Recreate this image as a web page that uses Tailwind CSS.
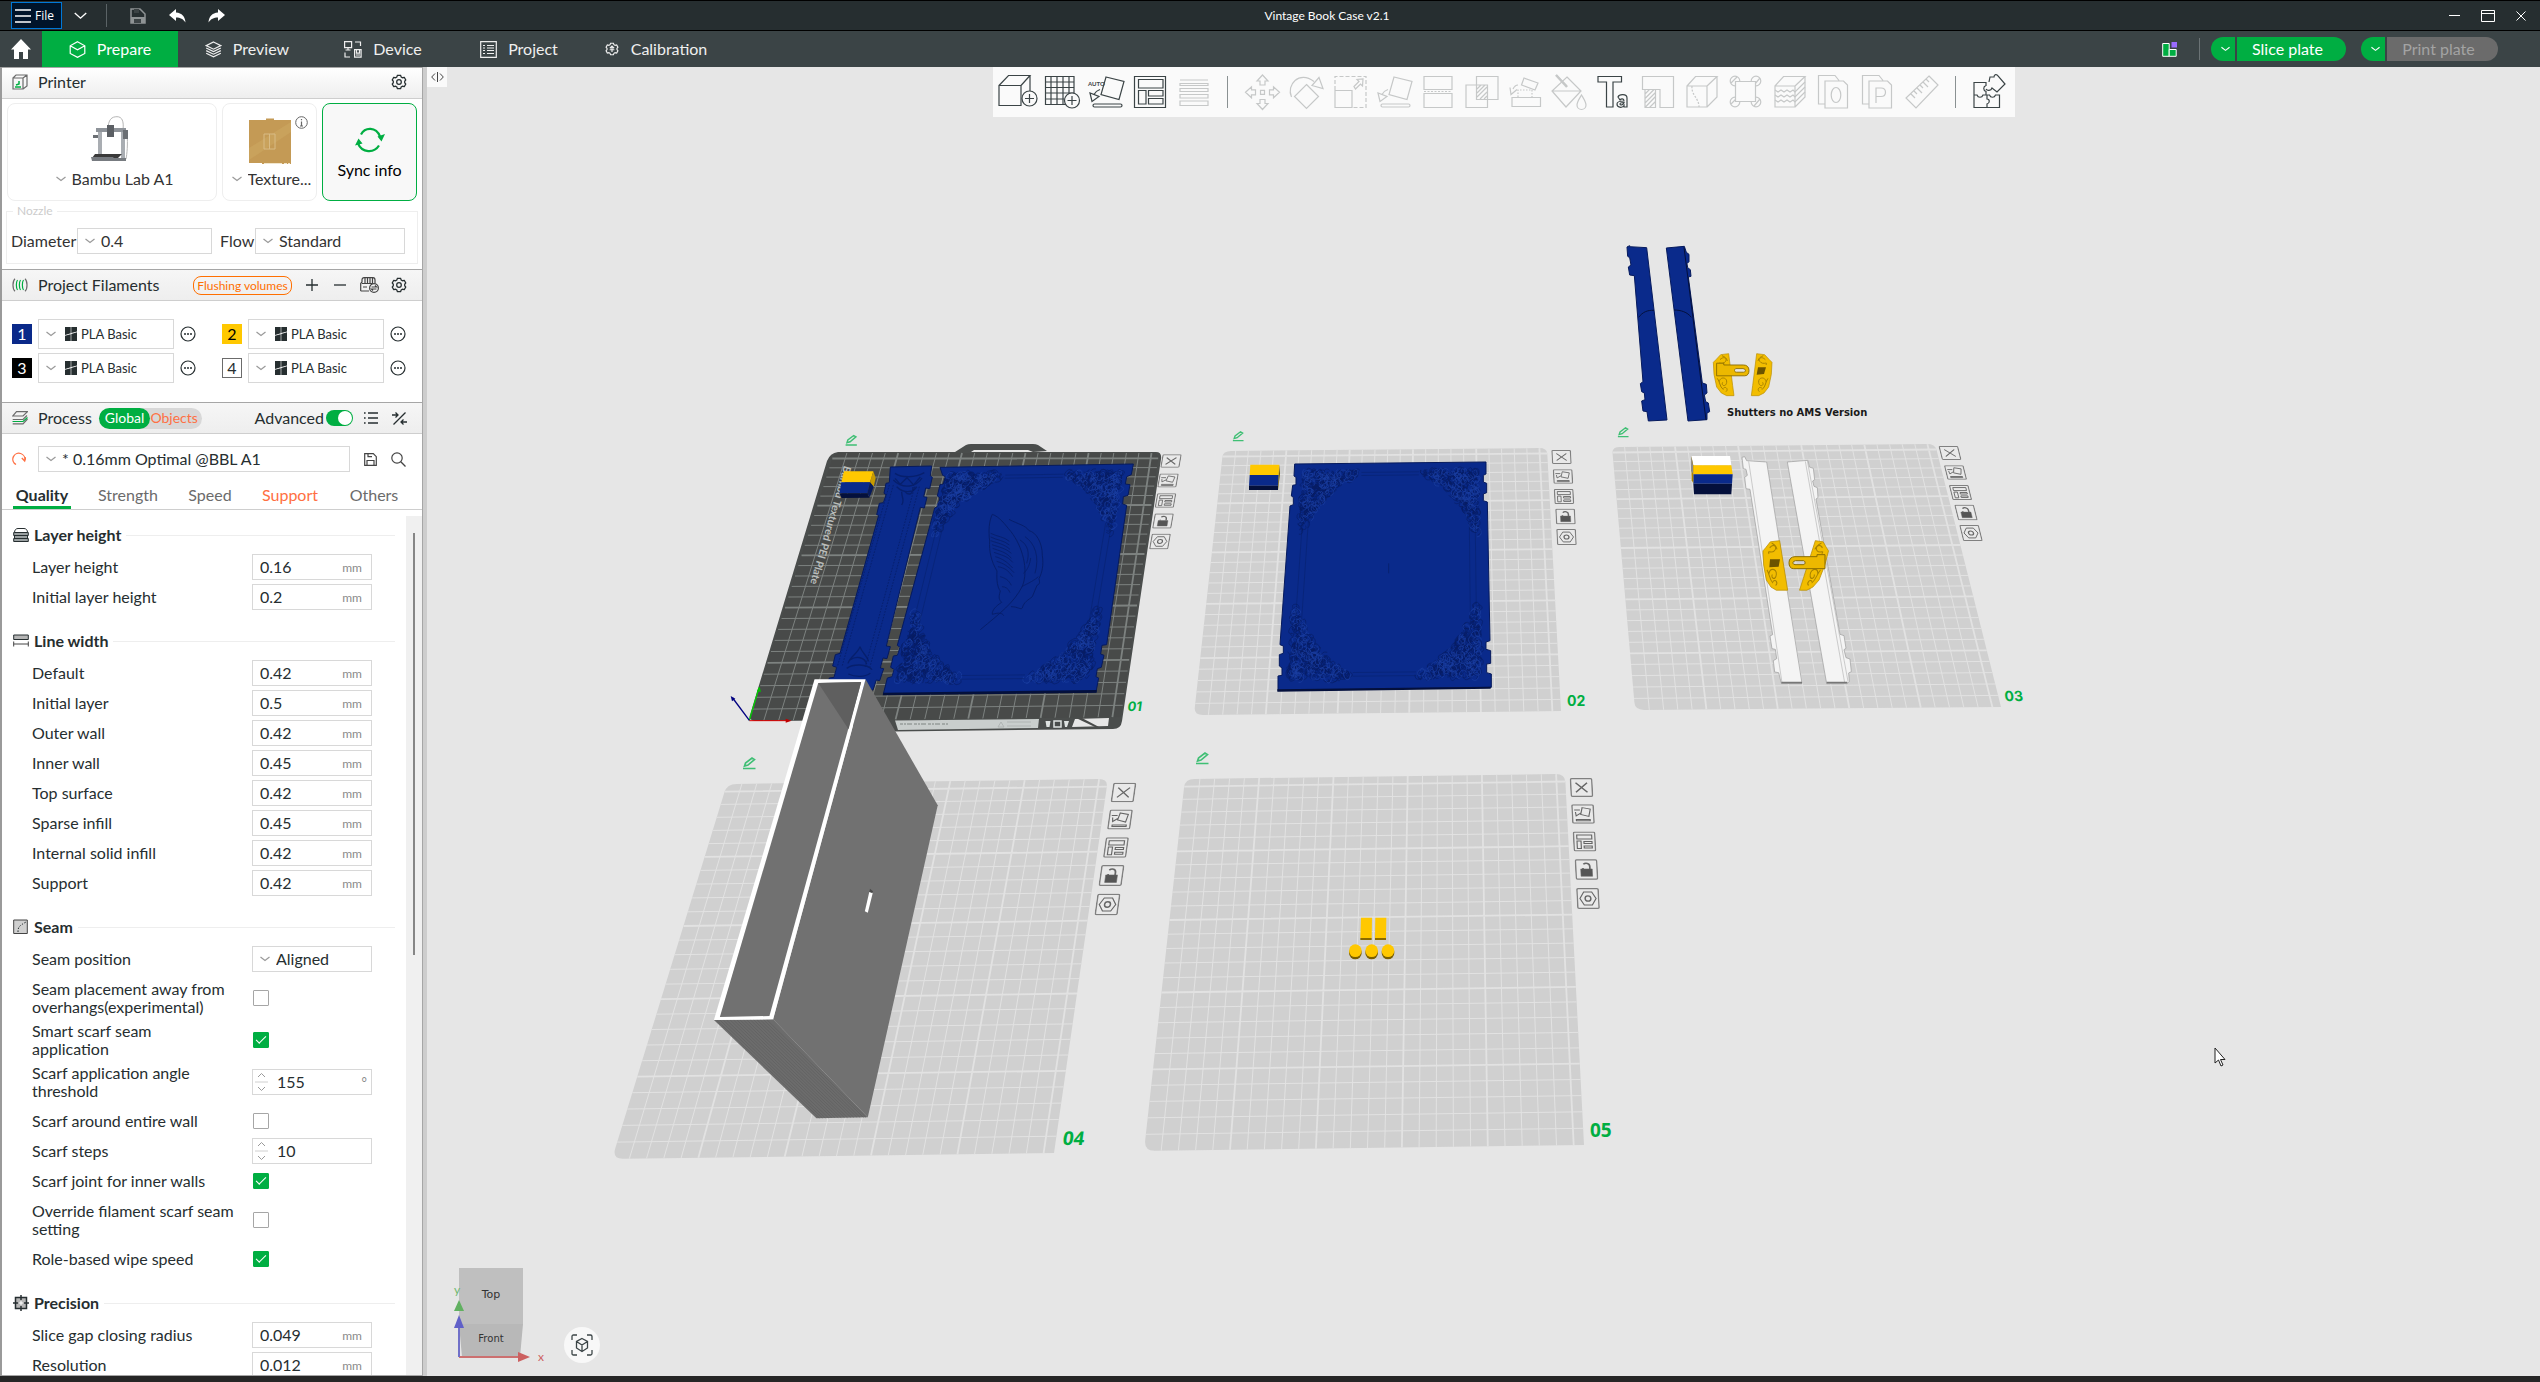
<!DOCTYPE html>
<html lang="en">
<head>
    <meta charset="UTF-8">
    <meta name="viewport" content="width=device-width, initial-scale=1.0">
    <title>Vintage Book Case v2.1</title>
    <script src="https://cdn.jsdelivr.net/npm/@tailwindcss/browser@4"></script>
</head>
<body class="h-screen overflow-hidden flex flex-col bg-[#262626] font-['Lato',sans-serif] text-base leading-[18px] text-[#262e30]">

    <!-- shared icons -->
    <svg class="hidden" aria-hidden="true">
        <symbol id="i-down" viewBox="0 0 10 6"><path d="M0.5 1 5 4.5 9.5 1" fill="none" stroke="currentColor" stroke-width="1.2"/></symbol>
        <symbol id="i-gear" viewBox="0 0 18 18"><g fill="none" stroke="currentColor" stroke-width="1.4"><path d="M7.2 1.6h3.6l.7 1.8 1.5.8 2-.4 1.6 2.9L15.400 8.200v1.600l1.200 1.500-1.600 2.900-2-.4-1.500.8-.7 1.800H7.200l-.7-1.800-1.500-.8-2 .4-1.600-2.900L2.600 9.800V8.200L1.400 6.700 3 3.800l2 .4 1.500-.8z"/><circle cx="9" cy="9" r="2.600"/></g></symbol>
        <symbol id="i-more" viewBox="0 0 16 16"><circle cx="8" cy="8" r="7" fill="none" stroke="currentColor" stroke-width="1.200"/><path d="M4 7.300h2v1.400H4zM7 7.300h2v1.400H7zM10 7.300h2v1.400h-2z" fill="currentColor"/></symbol>
        <symbol id="i-pla" viewBox="0 0 12 14"><path d="M0 0h5.700v6.300L0 8zM6.300 0H12v4.500L6.300 6zM0 8.700l5.700-1.500V14H0zM6.300 7 12 5.300V14H6.300z" fill="#262e30"/></symbol>
        <symbol id="i-flatten" viewBox="0 0 40 40"><g fill="none" stroke="currentColor" stroke-width="1.200"><path d="M20 5l18 4.500-5 18-18-5z"/><path d="M14 17.500c-3 1-5 3-6 5M4 21l2 8.500 7-5z"/><rect x="7" y="32" width="29" height="3" rx="1.500"/></g></symbol>
        <symbol id="i-arrange" viewBox="0 0 40 40"><g fill="none" stroke="currentColor" stroke-width="1.200"><path d="M4.500 4.500h31v31h-31zM8.500 7.500h24.500v8.500H8.500zM8.500 18.500H16V32H8.500zM18.500 18.500H33V24H18.500zM18.500 26.500H33V32H18.500z"/></g></symbol>
    </svg>

    <!-- title bar -->
    <header class="flex items-center h-[31px] shrink-0 bg-[#262e30] border-y border-black text-white">
        <div class="flex items-center w-[230px] pl-[11px]">
            <button class="flex items-center gap-1 h-[27px] w-[51px] pl-[3px] bg-[#00142a] border border-[#0078d7] font-['Open_Sans',sans-serif] text-xs">
                <svg class="w-4 h-[14px]" viewBox="0 0 16 14"><path d="M0 1h16M0 7h16M0 13h16" stroke="#fff" stroke-width="1.400"/></svg>File
            </button>
            <button class="ml-3" aria-label="More menus"><svg class="w-[13px] h-[8px]" viewBox="0 0 12 7"><path d="M.7.7 6 5.500 11.300.7" fill="none" stroke="#fff" stroke-width="1.300"/></svg></button>
            <span class="w-px h-[23px] ml-[19px] bg-[#5b6366]"></span>
            <button class="ml-[23px]" aria-label="Save"><svg class="w-4 h-4" viewBox="0 0 16 16"><path d="M1 1h9l5 5v9H1z" fill="none" stroke="#8e9394" stroke-width="1.500"/><path d="M1 9h14v6H1z" fill="#8e9394"/><path d="M4 1h5v4H4zM4 11h7v4H4z" fill="#3c4345"/></svg></button>
            <button class="ml-[23px]" aria-label="Undo"><svg class="w-[17px] h-[14px]" viewBox="0 0 17 14"><path d="M0 6 7 0v3.500c6 .5 9 4 9.500 10C14 10 11.500 8.600 7 8.600V12z" fill="#fff"/></svg></button>
            <button class="ml-[22px]" aria-label="Redo"><svg class="w-[17px] h-[14px]" viewBox="0 0 17 14"><path d="M17 6 10 0v3.500C4 4 1 7.500.5 13.500 3 10 5.500 8.600 10 8.600V12z" fill="#fff"/></svg></button>
        </div>
        <h1 class="flex-1 text-center text-xs">Vintage Book Case v2.1</h1>
        <div class="flex items-center w-[116px] pl-[25px] gap-[21px]">
            <button aria-label="Minimize"><svg class="w-[11px] h-[12px]" viewBox="0 0 11 12"><path d="M0 5.500h11" stroke="#fff"/></svg></button>
            <button aria-label="Maximize"><svg class="w-[14px] h-[12px]" viewBox="0 0 14 12"><path d="M.5.5h13v11H.5zM.5 3.500h13" fill="none" stroke="#fff"/></svg></button>
            <button aria-label="Close"><svg class="w-[10px] h-[10px]" viewBox="0 0 10 10"><path d="M.5.5l9 9M9.500.5l-9 9" stroke="#fff"/></svg></button>
        </div>
    </header>

    <!-- main tabs -->
    <nav class="flex items-center h-9 shrink-0 bg-[#3b4446] text-[#efefef]">
        <button class="w-[42px] flex justify-center" aria-label="Home"><svg class="w-5 h-5" viewBox="0 0 20 20"><path d="M10 0 20 10.500h-3V20h-5v-7H8v7H3v-9.500H0z" fill="#fff"/></svg></button>
        <a href="#prepare" class="flex items-center justify-center gap-[11px] w-[136px] h-full bg-[#00ae42] text-white">
            <svg class="w-[17px] h-[17px]" viewBox="0 0 17 17"><path d="M8.500.8 15.800 4.800v7.700l-7.300 3.900-7.300-3.900V4.800zM1.200 4.800l7.300 4 7.300-4" fill="none" stroke="currentColor" stroke-width="1.200"/></svg>Prepare</a>
        <a href="#preview" class="flex items-center justify-center gap-[11px] w-[138px] h-full">
            <svg class="w-[17px] h-[17px]" viewBox="0 0 17 17"><path d="M8.500 1l7.300 3.600-7.300 3.600-7.300-3.600zM1.200 7l7.300 3.600L15.800 7M1.200 9.600l7.300 3.600 7.300-3.600M1.200 12.200l7.300 3.600 7.300-3.600" fill="none" stroke="currentColor" stroke-width="1.200"/></svg>Preview</a>
        <a href="#device" class="flex items-center justify-center gap-[11px] w-[134px] h-full">
            <svg class="w-[18px] h-[17px]" viewBox="0 0 18 17"><path d="M.6.6h7v6h-7zM4 6.600V9M1.500 9h5M11 1h5.500v4M1 11.500V16h5M10.600 8.600h6.500v7.500h-6.500zM12.500 8.600v3.500h3V8.600M12 14h4" fill="none" stroke="currentColor" stroke-width="1.200"/></svg>Device</a>
        <a href="#project" class="flex items-center justify-center gap-[11px] w-[138px] h-full">
            <svg class="w-[17px] h-[17px]" viewBox="0 0 17 17"><path d="M.7.7h15.600v15.600H.7zM3 4.500h2M3 7h2M3 9.500h2M3 12.500h2M7 4.500h7M7 7h7M7 9.500h7M7 12.500h7" fill="none" stroke="currentColor" stroke-width="1.200"/></svg>Project</a>
        <a href="#calibration" class="flex items-center justify-center gap-3 w-[136px] h-full">
            <svg class="w-[14px] h-[14px]" viewBox="0 0 18 18"><path d="M7.200 1.600h3.600l.7 1.800 1.500.8 2-.4 1.600 2.900-1.200 1.500v1.600l1.200 1.500-1.600 2.900-2-.4-1.500.8-.7 1.800H7.200l-.7-1.800-1.500-.8-2 .4-1.600-2.900L2.600 9.800V8.200L1.400 6.700 3 3.800l2 .4 1.500-.8zM9 13V5.500M6.300 8 9 5.300 11.700 8M6 10h6" fill="none" stroke="currentColor" stroke-width="1.500"/></svg>Calibration</a>
        <div class="flex items-center ml-auto pr-[42px] text-white">
            <button aria-label="Filament layout"><svg class="w-[15px] h-[15px]" viewBox="0 0 15 15"><path d="M.7 1.500h6.500v12.800H.7z" fill="#00ae42" stroke="#fff"/><path d="M7.200 7.500h7v6.800h-7z" fill="#00ae42" stroke="#fff"/><path d="M9.500 0H15v5.500H9.500z" fill="#9b6bff"/></svg></button>
            <span class="w-px h-[22px] ml-[22px] mr-[11px] bg-[#6b7375]"></span>
            <button class="flex items-center justify-center w-6 h-6 mr-0.5 rounded-l-full bg-[#00ae42] pl-1" aria-label="Slice options"><svg class="w-[9px] h-[6px]"><use href="#i-down"/></svg></button>
            <button class="w-[109px] h-6 rounded-r-full bg-[#00ae42] pr-2">Slice plate</button>
            <button class="flex items-center justify-center w-6 h-6 ml-[15px] mr-0.5 rounded-l-full bg-[#00ae42] pl-1" aria-label="Print options"><svg class="w-[9px] h-[6px]"><use href="#i-down"/></svg></button>
            <button class="w-[111px] h-6 rounded-r-full bg-[#6b6b6b] text-[#a3a3a3] pr-2">Print plate</button>
        </div>
    </nav>

    <div class="flex flex-1 min-h-0 mb-1.5">

        <!-- settings sidebar -->
        <aside class="flex flex-col w-[427px] shrink-0 bg-white border-l-2 border-l-[#9a9a9a] border-r-4 border-r-[#cdcdcd]">
            <div class="flex flex-col flex-1 min-h-0 border border-[#a6a6a6] border-l-0">

                <div class="flex items-center h-[31px] shrink-0 pb-0.5 pl-[10px] pr-[15px] bg-linear-to-b from-white to-[#eee] border-b border-[#cecece]">
                    <svg class="w-4 h-4 mr-[10px]" viewBox="0 0 16 16"><path d="M1 4v11h10V4zM1 4l3-3h11v11l-4 3M11 4l4-3" fill="none" stroke="#6b6b6b" stroke-width="1.200"/><path d="M3 13h6M4 11l3-1v-3" fill="none" stroke="#00ae42" stroke-width="1.500"/></svg>
                    <h2 class="flex-1">Printer</h2>
                    <button aria-label="Printer settings"><svg class="w-4 h-4"><use href="#i-gear"/></svg></button>
                </div>

                <div class="flex gap-[5px] h-[98px] shrink-0 mt-1 pl-[5px] pr-1">
                    <div class="flex flex-col items-center justify-end w-[210px] pb-[10px] rounded-lg border border-[#eee]">
                        <svg class="w-10 h-[46px] mb-[6px] mr-1" viewBox="0 0 40 46">
                            <path d="M18 14C18 3 22 .7 27 .7S34 5 33 14M37 18c1 10 0 20-1 25" fill="none" stroke="#b5b5b5"/>
                            <path d="M8 12h4v29H8zM31 12h4v31h-4z" fill="#a9adb2"/><path d="M6 12h30v4H6z" fill="#8e9399"/><path d="M17 9h7v12h-7z" fill="#5b5f64"/><path d="M3 19h5v3H3zM33 14h5v9h-5z" fill="#6b6f74"/>
                            <path d="M5 38h27l-4 4H2z" fill="#3a3a3a"/><path d="M1 41h22l3 4H2zM24 42h12v3H24z" fill="#777b80"/>
                        </svg>
                        <label class="flex items-center gap-1.5 text-[#333]"><svg class="w-[10px] h-1.5 text-[#999]"><use href="#i-down"/></svg>
                            <select aria-label="Printer" class="appearance-none w-[103px] -mr-1.5 leading-[22px]"><option>Bambu Lab A1</option></select></label>
                    </div>
                    <div class="relative flex flex-col items-center justify-end w-[95px] pb-[10px] rounded-lg border border-[#eee]">
                        <svg class="w-[42px] h-[47px] mb-[3px]" viewBox="0 0 42 47"><path d="M0 2h17V.5h8V2h17v44H13v-1H0z" fill="#c49a55"/><path d="M0 30 42 4v10L0 42z" fill="#c9a25c"/><path d="M15 16h11v15H15zM20.500 16v15" fill="none" stroke="#d8bb85"/><path d="M15 45.500h26" stroke="#f1e6cd" stroke-dasharray="18 2 3 1"/></svg>
                        <button class="absolute right-2 top-3" aria-label="Plate info"><svg class="w-[13px] h-[13px]" viewBox="0 0 13 13"><circle cx="6.500" cy="6.500" r="5.800" fill="none" stroke="#666"/><path d="M6.500 3v1.300M6.500 5.500V10M5 10h3" stroke="#666" stroke-width="1.200"/></svg></button>
                        <label class="flex items-center gap-1.5 text-[#333]"><svg class="w-[10px] h-1.5 text-[#999]"><use href="#i-down"/></svg>
                            <select aria-label="Build plate" class="appearance-none w-[66px] -mr-1.5 leading-[22px]"><option>Texture...</option></select></label>
                    </div>
                    <button class="flex flex-col items-center justify-center gap-2 pt-0.5 w-[95px] rounded-lg border border-[#00ae42] bg-[#f8f8f8] text-black">
                        <svg class="w-[30px] h-[26px]" viewBox="0 0 30 26"><g fill="none" stroke="#00ae42" stroke-width="2.200"><path d="M6 7.500C10 0 21-.5 25 9.500M3 16.500C7 26 19 26.500 24 18.500"/></g><path d="M22.500 9.500 30 7l-3.500 7.500zM7.500 16.500 0 18.500l3.500-7z" fill="#00ae42"/></svg>
                        Sync info
                    </button>
                </div>

                <fieldset class="h-[61px] shrink-0 mt-0.5 ml-1 mr-1 pl-1 border border-[#eee] text-[#333]">
                    <legend class="ml-0.5 px-1 text-xs leading-4 text-[#ccc]">Nozzle</legend>
                    <div class="flex items-center mt-[9px]">
                        <label for="dia" class="w-[66px] whitespace-nowrap">Diameter</label>
                        <div class="flex items-center gap-1.5 w-[135px] h-[26px] pl-[7px] border border-[#d8d8d8]"><svg class="w-[10px] h-1.5 text-[#999]"><use href="#i-down"/></svg><select id="dia" class="appearance-none flex-1 min-w-0"><option>0.4</option></select></div>
                        <label for="flow" class="ml-2 w-[35px]">Flow</label>
                        <div class="flex items-center gap-1.5 w-[150px] h-[26px] pl-[7px] border border-[#d8d8d8]"><svg class="w-[10px] h-1.5 text-[#999]"><use href="#i-down"/></svg><select id="flow" class="appearance-none flex-1 min-w-0"><option>Standard</option></select></div>
                    </div>
                </fieldset>

                <div class="flex items-center h-8 shrink-0 mt-[5px] pl-[10px] pr-[15px] bg-linear-to-b from-[#f6f6f6] to-[#eee] border-t border-t-[#a6a6a6] border-b border-b-[#cecece]">
                    <svg class="w-4 h-3.5 mr-[10px]" viewBox="0 0 16 14"><g fill="none" stroke-width="1.200"><path d="M3 .7C.3 3 .3 11 3 13.300M13 .7c2.700 2.300 2.700 10.300 0 12.600" stroke="#6b6b6b"/><path d="M5.500 2c-1.500 2-1.500 8 0 10M8.500 2C7 4 7 10 8.500 12M11.500 2c-1.500 2-1.500 8 0 10" stroke="#00ae42"/></g></svg>
                    <h2 class="flex-1">Project Filaments</h2>
                    <button class="h-[19px] w-[99px] mr-[14px] rounded-lg border border-[#ff6f00] text-[#ff6f00] text-xs leading-[17px]">Flushing volumes</button>
                    <button class="mr-4" aria-label="Add filament"><svg class="w-3 h-3" viewBox="0 0 12 12"><path d="M6 0v12M0 6h12" stroke="#262e30" stroke-width="1.300"/></svg></button>
                    <button class="mr-[14px]" aria-label="Remove filament"><svg class="w-3 h-3" viewBox="0 0 12 12"><path d="M0 6h12" stroke="#262e30" stroke-width="1.300"/></svg></button>
                    <button class="mr-3" aria-label="Sync AMS"><svg class="w-[19px] h-[16px]" viewBox="0 0 19 16"><g fill="none" stroke="#444" stroke-width="1.200"><path d="M.7 14V6.500L2 5V3C2 1.500 3 .7 4 .7h9c1 0 2 .8 2 2.300v3M2 6.500h11M.7 14H9M5 1v5M7.500 1v5M10 1v5M12.500 1v5M3 10h4"/><circle cx="14" cy="11" r="4.400" fill="#f3f3f3"/><path d="M11.500 10h5l-1.500-1.500M16.500 12h-5l1.500 1.500"/></g></svg></button>
                    <button aria-label="Filament settings"><svg class="w-4 h-4"><use href="#i-gear"/></svg></button>
                </div>

                <div id="filaments" class="grid grid-cols-[210px_1fr] gap-y-[4px] h-[101px] shrink-0 pt-[18px] pl-[10px] content-start"></div>

                <div class="flex items-center h-8 shrink-0 pl-[10px] pr-[15px] bg-linear-to-b from-[#f6f6f6] to-[#eee] border-t border-t-[#a6a6a6] border-b border-b-[#cecece]">
                    <svg class="w-4 h-3.5 mr-[10px]" viewBox="0 0 16 14"><g fill="none" stroke="#6b6b6b" stroke-width="1.200"><path d="M4.500.7h11L11 5H.7zM15 4.500 11 8.500H.7"/><path d="M15.500 8 11 12.800H.7M.7 10.500H11" /><path d="M.7 10.500H11l4.500-4" stroke="#00ae42"/></g></svg>
                    <h2 class="mr-[7px]">Process</h2>
                    <div class="flex w-[103px] h-[21px] rounded-full bg-[#d8d8d8] text-sm">
                        <button class="w-[53px] rounded-full bg-[#00ae42] text-white">Global</button>
                        <button class="flex-1 text-[#ff7043] pr-1">Objects</button>
                    </div>
                    <label for="adv" class="ml-auto mr-0.5">Advanced</label>
                    <input id="adv" type="checkbox" checked role="switch" class="appearance-none w-[27px] h-4 mr-[11px] rounded-full bg-[#00ae42] before:block before:w-[14px] before:h-[14px] before:mt-px before:ml-3 before:rounded-full before:bg-white">
                    <button class="mr-[14px]" aria-label="Parameter list"><svg class="w-[14px] h-3" viewBox="0 0 14 12"><path d="M0 1h1.600M0 6h1.600M0 11h1.600M4 1h10M4 6h10M4 11h10" stroke="#262e30" stroke-width="1.400"/></svg></button>
                    <button aria-label="Compare presets"><svg class="w-[15px] h-[15px]" viewBox="0 0 15 15"><path d="M13.500 1.500l-12 12M0 4h6M3.500 1.500 6 4 3.500 6.500M15 11H9M11.500 8.500 9 11l2.500 2.500" fill="none" stroke="#262e30" stroke-width="1.300"/></svg></button>
                </div>

                <div class="flex items-center h-[26px] shrink-0 mt-3 pl-[10px] pr-[15px]">
                    <button class="mr-3" aria-label="Reset preset"><svg class="w-[14px] h-[14px]" viewBox="0 0 14 14"><path d="M4 12.500A6 6 0 1 1 12.700 8.500M9.800 6l2.900 3L14 5.300" fill="none" stroke="#ff6f42" stroke-width="1.300"/></svg></button>
                    <div class="flex items-center gap-1.5 w-[312px] h-[26px] pl-[7px] border border-[#d8d8d8]"><svg class="w-[10px] h-1.5 text-[#999]"><use href="#i-down"/></svg><select aria-label="Process preset" class="appearance-none flex-1 min-w-0"><option>* 0.16mm Optimal @BBL A1</option></select></div>
                    <button class="ml-[14px] mr-[14px]" aria-label="Save preset"><svg class="w-[13px] h-[13px]" viewBox="0 0 13 13"><path d="M.7.700h8.600l3 3v8.600H.7zM3 12.300V7.500h7v4.800M4 .7v3h4" fill="none" stroke="#444" stroke-width="1.200"/></svg></button>
                    <button aria-label="Search"><svg class="w-[15px] h-[15px]" viewBox="0 0 15 15"><circle cx="6" cy="6" r="5.200" fill="none" stroke="#444" stroke-width="1.200"/><path d="M9.800 9.800 14.500 14.500" stroke="#444" stroke-width="1.300"/></svg></button>
                </div>

                <div class="flex h-[38px] shrink-0 pl-[11px] border-b border-[#cecece] text-[#6b6b6b]">
                    <a href="#quality" class="w-[58px] pt-[14px] text-center font-bold text-[#262e30] border-b-[3px] border-[#00ae42]">Quality</a>
                    <a href="#strength" class="w-[114px] pt-[14px] text-center">Strength</a>
                    <a href="#speed" class="w-[50px] pt-[14px] text-center">Speed</a>
                    <a href="#support" class="w-[110px] pt-[14px] text-center text-[#ff6f42]">Support</a>
                    <a href="#others" class="w-[58px] pt-[14px] text-center">Others</a>
                </div>

                <div class="flex flex-1 min-h-0">
                    <div id="settings" class="flex-1 overflow-hidden pt-2 pl-[11px] pr-[11px]"></div>
                    <div class="w-4 mt-1.5 pt-[17px] bg-[#f0f0f0]"><div class="ml-[7px] w-0.5 h-[422px] bg-[#868686]"></div></div>
                </div>
            </div>
        </aside>

        <!-- 3D view -->
        <main class="relative flex-1 min-w-0 bg-[#e6e6e6]">
            <svg id="scene" class="absolute inset-0 w-full h-full" viewBox="427 67 2113 1309" preserveAspectRatio="xMidYMid meet"></svg>
            <button class="absolute left-0 top-0 w-5 h-5 flex items-center justify-center bg-[#fafafa]" aria-label="Collapse sidebar"><svg class="w-[13px] h-[10px]" viewBox="0 0 13 10"><path d="M4 1.500.7 5 4 8.500M9 1.500 12.300 5 9 8.500M6.500 0v10" fill="none" stroke="#444"/></svg></button>
            <div class="relative flex justify-center pl-10 pointer-events-none">
                <div id="toolbar" class="flex items-center h-[50px] px-[3px] bg-[#fafafa] pointer-events-auto"></div>
            </div>
        </main>
    </div>

    <script>
        // ---------- filaments ----------
        const filaments = [
            ['1', '#0a2989', '#fff', '#0a2989'], ['2', '#ffc800', '#000', '#ffc800'],
            ['3', '#000', '#fff', '#000'], ['4', '#fff', '#262e30', '#6b6b6b'],
        ];
        document.getElementById('filaments').innerHTML = filaments.map(([n, bg, fg, bd]) => `
            <div class="flex items-center h-[30px]">
                <button class="w-5 h-5 mr-1.5 border text-center" style="background:${bg};color:${fg};border-color:${bd}" aria-label="Filament ${n} colour">${n}</button>
                <div class="flex items-center w-[136px] h-[30px] pl-[7px] border border-[#d8d8d8]">
                    <svg class="w-[10px] h-1.5 mr-[9px] text-[#999]"><use href="#i-down"/></svg>
                    <svg class="w-3 h-[14px] mr-1"><use href="#i-pla"/></svg>
                    <select aria-label="Filament ${n}" class="appearance-none flex-1 min-w-0 text-[13px]"><option>PLA Basic</option></select>
                </div>
                <button class="ml-1.5" aria-label="Edit filament ${n}"><svg class="w-4 h-4"><use href="#i-more"/></svg></button>
            </div>`).join('');

        // ---------- process settings ----------
        const icons = {
            layer: '<path d="M.7 5.500h14.600v3H.7zM1.500 8.500h13v3h-13zM.7 11.500h14.600v3H.7z" fill="#9aa0a1" stroke="#262e30"/><path d="M1.500 5.500c0-2.500 1.500-4 3.500-4h6c2 0 3.500 1.500 3.500 4z" fill="#fff" stroke="#262e30"/>',
            line: '<path d="M.7 2h14.600v4.500H.7z" fill="#b5b5b5" stroke="#262e30"/><path d="M.7 8.500v5M15.300 8.500v5M.7 11h14.600" fill="none" stroke="#444"/>',
            seam: '<path d="M.7 1h13.600v13.500H.7z" fill="#d0d0d0" stroke="#444"/><path d="M5 13c0-5 1-6 8-10" fill="none" stroke="#262e30" stroke-dasharray="1.500 1.500"/>',
            precision: '<path d="M2.500 2.500h11v11h-11z" fill="#b5b5b5" stroke="#262e30" stroke-width="1.500"/><path d="M8 0v5M8 11v5M0 8h5M11 8h5" stroke="#262e30" stroke-width="1.500"/><path d="M6 8h4M8 6v4" stroke="#fff"/>',
        };
        const sections = [
            ['layer', 'Layer height', [['Layer height', 'mm', '0.16'], ['Initial layer height', 'mm', '0.2']]],
            ['line', 'Line width', [['Default', 'mm', '0.42'], ['Initial layer', 'mm', '0.5'], ['Outer wall', 'mm', '0.42'], ['Inner wall', 'mm', '0.45'],
                ['Top surface', 'mm', '0.42'], ['Sparse infill', 'mm', '0.45'], ['Internal solid infill', 'mm', '0.42'], ['Support', 'mm', '0.42']]],
            ['seam', 'Seam', [['Seam position', 'select', 'Aligned'], ['Seam placement away from overhangs(experimental)', 'check', false, 'h-[45px] pt-[3px]'],
                ['Smart scarf seam\napplication', 'check', true, 'h-[42px]'], ['Scarf application angle threshold', 'spin', '155', 'h-[45px] pb-[3px]', '°'],
                ['Scarf around entire wall', 'check', false], ['Scarf steps', 'spin', '10', '', ''], ['Scarf joint for inner walls', 'check', true],
                ['Override filament scarf seam setting', 'check', false, 'h-[48px]'], ['Role-based wipe speed', 'check', true]]],
            ['precision', 'Precision', [['Slice gap closing radius', 'mm', '0.049'], ['Resolution', 'mm', '0.012']]],
        ];
        let id = 0;
        const control = (type, value, unit, key) => {
            if (type === 'mm') return `<div class="flex items-center w-[120px] h-[26px] pl-[7px] pr-[9px] border border-[#d8d8d8]"><input id="${key}" value="${value}" class="flex-1 min-w-0"><span class="pt-0.5 text-xs text-[#8a8a8a]">mm</span></div>`;
            if (type === 'select') return `<div class="flex items-center gap-1.5 w-[120px] h-[26px] pl-[7px] border border-[#d8d8d8]"><svg class="w-[10px] h-1.5 text-[#999]"><use href="#i-down"/></svg><select id="${key}" class="appearance-none flex-1 min-w-0"><option>${value}</option></select></div>`;
            if (type === 'spin') return `<div class="flex items-center w-[120px] h-[26px] pl-[2px] pr-1 border border-[#d8d8d8]"><svg class="w-[13px] h-5 mr-[9px]" viewBox="0 0 13 20"><path d="M3 5l3.500-3.500L10 5M3 15l3.500 3.500L10 15" fill="none" stroke="#999"/><path d="M0 10h13" stroke="#d0d0d0"/></svg><input id="${key}" value="${value}" class="flex-1 min-w-0"><span class="text-[13px] text-[#8a8a8a]">${unit}</span></div>`;
            return `<input id="${key}" type="checkbox" ${value ? 'checked' : ''} class="appearance-none w-4 h-4 ml-px rounded-[1px] border border-[#a6a6a6] checked:border-[#00ae42] checked:bg-[#00ae42] checked:after:block checked:after:w-[10px] checked:after:h-[5px] checked:after:mt-[3px] checked:after:ml-[2px] checked:after:-rotate-45 checked:after:border-l checked:after:border-b checked:after:border-white">`;
        };
        document.getElementById('settings').innerHTML = sections.map(([icon, title, rows]) => `
            <section class="mb-3">
                <h3 class="flex items-center h-[34px] font-bold"><svg class="w-4 h-4 mr-[5px]" viewBox="0 0 16 16">${icons[icon]}</svg>${title}<span class="flex-1 ml-[5px] h-px bg-[#eee]"></span></h3>
                ${rows.map(([label, type, value, size, unit]) => {
                    const key = 'opt' + (++id);
                    return `<div class="flex items-center pl-[19px] ${size || 'h-[30px]'}"><div class="w-[220px]"><label for="${key}" class="block w-[204px] whitespace-pre-line">${label}</label></div>${control(type, value, unit, key)}</div>`;
                }).join('')}
            </section>`).join('');

        // ---------- canvas toolbar ----------
        const cube = 'M5 14h20v21H5zM5 14 13.500 4.500H35L25 14M35 4.500V25L25 35';
        const tools = [
            ['Add', 1, '<path d="M1 13.500h22v20H1zM1 13.500 10.500 3.500H32L23 13.500M32 3.500V19"/><circle cx="31.500" cy="26.500" r="7.500" fill="#fafafa"/><path d="M31.500 22v9M27 26.500h9"/>'],
            ['Add plate', 1, '<path d="M3.500 4.500h28.500V32.500H3.500zM9 4.500v28M15 4.500v28M21 4.500v28M27 4.500v28M3.500 10H32M3.500 15.500H32M3.500 21H32M3.500 27H32"/><circle cx="30" cy="28.500" r="7.500" fill="#fafafa"/><path d="M30 24v9M25.500 28.500h9"/>'],
            ['Auto orient', 1, '<use href="#i-flatten" width="40" height="40" stroke="none"/><text x="2" y="13.500" font-size="6" font-weight="bold" fill="currentColor" stroke="none">AUTO</text>'],
            ['Arrange', 1, '<use href="#i-arrange" width="40" height="40" stroke="none"/>'],
            ['Variable layer height', 0, '<path d="M6 8h28M6 11.500h28v2H6zM6 16.500h28v3H6zM6 22.500h28v3.500H6zM6 29h28v4.500H6z"/>'],
            null,
            ['Move', 0, '<path d="M20.500 3l5.500 6h-3v4h-5V9h-3zM20.500 37.500l5.500-6h-3v-4h-5v4h-3zM3.500 20.300l6-5.500v3h4v5h-4v3zM37.500 20.300l-6-5.500v3h-4v5h4v3zM18.500 18.300h4v4h-4z"/>'],
            ['Rotate', 0, '<path d="M20.500 12.500l12 12-12 12-12-12zM5.500 25C0 13 13-2 28 9.500M33 5.500l4 11-11-3z"/>'],
            ['Scale', 0, '<path d="M5 18.500h17v17H5z"/><path d="M5 18V4.500h31v31H22" stroke-dasharray="4 2"/><path d="M24 14.500l5-5-2-2 6-.500-.500 7-2-2-5 5z"/>'],
            ['Lay on face', 0, '<use href="#i-flatten" width="40" height="40" stroke="none"/>'],
            ['Cut', 0, '<path d="M6 4.500h28V17.500H6zM6 21.500h28v14H6z"/><path d="M6 19.500h28" stroke-dasharray="2 1.500"/>'],
            ['Boolean', 0, '<path d="M14.500 4.500H36v23H14.500zM4 13h21.500v22.500H4zM15 17l4-4M15 21l8-8M15 25l10-10M18 27l7-7M22 27l3-3"/>'],
            ['Assembly cut', 0, '<path d="M6 25.500h28.500v9H6zM18 6l14 5-3 7-13.500-5zM4 15.500l1 7 6-5M7 17c1-2 3-4 5-4"/><path d="M12 25V18h14v7" stroke-dasharray="1.500 1.500"/>'],
            ['Color painting', 0, '<path d="M17 5l14 14-15 16L2 19zM2 19h29M6 3l11 11" /><path d="M6 3l11 12" stroke-width="2.500"/><path d="M31.500 23c3 5 4.500 7 4.500 10a4.500 4.500 0 0 1-9 0c0-3 1.500-5 4.500-10z"/>'],
            ['Text', 1, '<path d="M4 4.500h23.500v5.500H19v25h-6.500V10H4z"/><path d="M24 25c1-3 9-3.500 9 1v9h-3v-1.500c-2 3-7 2-7-1.500 0-3 4-3 7-3 0-3-3-2.500-4-1zM30 30.500c-2 0-4 0-4 1.500s3 1.500 4-1.500z"/>'],
            ['Support painting', 0, '<path d="M4.500 4.500h31v31H22V17.500H4.500zM7 17.500v18h10.500v-18M7 22l4.500-4.500M7 26.500l9-9M7 31l10.500-10.500M7 35.500l10.500-11M11.500 35.500l6-6"/>'],
            ['Seam painting', 0, `<path d="${cube}"/><path d="M10 14c-1 9 7 12 7 21" stroke-dasharray="2 1.500"/>`],
            ['Brim ears', 0, '<circle cx="9" cy="9" r="4.800"/><circle cx="30" cy="9" r="4.800"/><circle cx="9" cy="30" r="4.800"/><circle cx="30" cy="30" r="4.800"/><path d="M5 11l6-6M28 13l6-7M5 32l6-6M28 34l6-7"/><path d="M9.500 9.500h20v20h-20z" fill="#fafafa"/>'],
            ['Fuzzy skin', 0, `<path d="${cube}"/><path d="M5 18l3 2 3-2 3 2 3-2 3 2 3-2 2 2 10-10M5 23l3 2 3-2 3 2 3-2 3 2 3-2 2 2 10-10M5 28l3 2 3-2 3 2 3-2 3 2 3-2 2 2 10-10"/>`],
            ['Object list', 0, '<path d="M11 32H4.500V3.500H21l4 5M11 9h18.500l4 4v23H11z"/><ellipse cx="22" cy="23" rx="4.800" ry="7.500"/>'],
            ['Part list', 0, '<path d="M11 32H4.500V3.500H21l4 5M11 9h18.500l4 4v23H11zM18 31V16h5c6 0 6 8.500 0 8.500h-5"/>'],
            ['Measure', 0, '<path d="M27 4l9 9-22 23-10-10zM24 7l3 3M21 10l5 5M18 13l3 3M15 16l5 5M12 19l3 3M9 22l4 4"/>'],
            null,
            ['Assembly view', 1, '<path d="M4 10.500h12v3c-3 1-3 5 0 6V23h-3c-1 3-5 3-6 0H4zM4 23v12.500h13V32c3-1 3-5 0-5v-4M17 35.500h12.500V23h-4c-1 3-5 3-6 0h-3M19 10l1-5h4c0-3 3-3 4-1l7 8-8 8-5-4c-1 3-5 3-6 1"/>'],
        ];
        document.getElementById('toolbar').innerHTML = tools.map(t => t === null
            ? '<span class="flex justify-center w-6"><span class="w-px h-8 bg-[#8a9192]"></span></span>'
            : `<button class="w-[44px] h-[44px] flex items-center justify-center ${t[1] ? 'text-[#3b4446]' : 'text-[#c6c8c8]'}" aria-label="${t[0]}"><svg class="w-10 h-10 overflow-visible" viewBox="0 0 40 40" fill="none" stroke="currentColor" stroke-width="1.200">${t[2]}</svg></button>`).join('');

        // ---------- scene ----------
        // unit square to quad, corners given as BL, BR, TR, TL
        function project([p0, p1, p2, p3]) {
            const sx = p0[0] - p1[0] + p2[0] - p3[0], sy = p0[1] - p1[1] + p2[1] - p3[1];
            const dx1 = p1[0] - p2[0], dx2 = p3[0] - p2[0], dy1 = p1[1] - p2[1], dy2 = p3[1] - p2[1];
            const det = dx1 * dy2 - dx2 * dy1;
            const g = (sx * dy2 - dx2 * sy) / det, h = (dx1 * sy - sx * dy1) / det;
            const a = p1[0] - p0[0] + g * p1[0], b = p3[0] - p0[0] + h * p3[0];
            const d = p1[1] - p0[1] + g * p1[1], e = p3[1] - p0[1] + h * p3[1];
            return (u, v) => {
                const w = g * u + h * v + 1;
                return ((a * u + b * v + p0[0]) / w).toFixed(1) + ' ' + ((d * u + e * v + p0[1]) / w).toFixed(1);
            };
        }
        function plate(quad, fill, line) {
            const p = project(quad), r = 0.025;
            let thin = '', thick = '';
            for (let i = 1; i <= 25; i++) {
                const t = i / 25.6, d = `M${p(t, 0)}L${p(t, 1)}M${p(0, t)}L${p(1, t)}`;
                if (i % 5) thin += d; else thick += d;
            }
            return `<path d="M${p(r, 0)}L${p(1, 0)}L${p(1, 1 - r)}Q${p(1, 1)} ${p(1 - r, 1)}L${p(r, 1)}Q${p(0, 1)} ${p(0, 1 - r)}L${p(0, r)}Q${p(0, 0)} ${p(r, 0)}z" fill="${fill}"/>
                <path d="${thin}" stroke="${line}" stroke-width="1"/><path d="${thick}" stroke="${line}" stroke-width="1.800"/>`;
        }
        // carved scrollwork filling the corners of a cover
        let seed = 7;
        const rnd = () => (seed = (seed * 16807) % 2147483647) / 2147483647;
        function carving(quad, count) {
            const p = project(quad);
            let dark = '', light = '';
            for (let n = 0; n < count;) {
                const u = 0.05 + rnd() * 0.9, v = 0.04 + rnd() * 0.92;
                const x = Math.abs(u - 0.5) / 0.46, y = Math.abs(v - 0.5) / 0.47;
                if (x * x + y * y < 1.02 || x * y < 0.34) continue;
                n++;
                const s = 0.008 + rnd() * 0.014, a = rnd() * 6.28, q = (k, m) => p(u + s * m * Math.cos(a + k), v + s * m * Math.sin(a + k));
                const d = `M${q(0, 1)}Q${q(1, 1.500)} ${q(2, 1)}T${q(4, 0.6)}`;
                if (n % 4) dark += d; else light += d;
            }
            return `<path d="${dark}" fill="none" stroke="#061c63" stroke-opacity=".75" stroke-width=".8"/><path d="${light}" fill="none" stroke="#1a3da0" stroke-width=".7"/>
                <path d="M${p(.06, .28)}L${p(.06, .72)}M${p(.09, .28)}L${p(.09, .72)}M${p(.94, .28)}L${p(.94, .72)}M${p(.91, .28)}L${p(.91, .72)}M${p(.35, .045)}L${p(.65, .045)}M${p(.35, .06)}L${p(.65, .06)}M${p(.35, .955)}L${p(.65, .955)}M${p(.35, .94)}L${p(.65, .94)}" stroke="#061c63" stroke-opacity=".6" stroke-width=".7"/>`;
        }
        const glyphs = [
            ['Delete plate', '<path d="M10 10l20 20M30 10 10 30" stroke-width="2.500"/>'],
            ['Orient plate', '<path d="M19 7l14 3-3 15-14-4zM8 31h24v3H8zM5 12h10M7 16l1 8 8-6" stroke-width="2"/>'],
            ['Arrange plate', '<path d="M7 7h26v8H7zM7 19h7v15H7zM19 20h14v4H19zM19 29h14v4H19z" stroke-width="2"/>'],
            ['Lock plate', '<path d="M10 19h20v14H10z" fill="#555"/><path d="M14 19v-2M15 10c4-4 11-2 11 4v5" stroke-width="3"/>'],
            ['Plate settings', '<path d="M13 8h14l7 12-7 12H13L6 20z" stroke-width="2"/><circle cx="20" cy="20" r="5" stroke-width="2.500"/>'],
        ];
        function plateButtons(points, w, h, skew) {
            return points.map(([x, y], i) => `<g transform="translate(${x} ${y}) skewX(${skew}) scale(${w / 40} ${(h + i * 0.6) / 40}) translate(-20 -20)"><foreignObject width="40" height="40"><button class="block w-10 h-10" aria-label="${glyphs[i][0]}"><svg class="w-10 h-10" viewBox="0 0 40 40" fill="none" stroke="#666"><rect x="1.500" y="1.500" width="37" height="37" rx="2" fill="#e9e9e9" stroke="#808080" stroke-width="2.500"/>${glyphs[i][1]}</svg></button></foreignObject></g>`).join('');
        }
        const pencil = (x, y, s) => `<g transform="translate(${x} ${y}) scale(${s})" fill="none" stroke="#3fbf74" stroke-width="1.600"><path d="M-6 5.500H6.500M-4.500 3l1-3L3-5l2.500 1.500L-1 2z"/></g>`;
        const label = (x, y, size, skew, n, font) => `<text transform="translate(${x} ${y}) skewX(${skew})" font-family="${font}" font-weight="bold" font-size="${size}" fill="#00ae42">${n}</text>`;

        const light = '#d0d0d0', lightLine = '#e2e2e2';
        const cover1 = [[884, 691], [1097, 689], [1133, 464], [940, 467]];
        const cover2 = [[1278, 688], [1490, 686], [1486, 462], [1295, 464]];

        // half of the shutter latch, drawn with its straight side on the right
        const latch = `<path d="M46 0 22 3 8 18 0 26l2 36 8 38 14 18 16 8h22l-4-30z" fill="#f2bd00" stroke="#b88d00" stroke-width="2"/>
            <path d="M20 18c14-14 24 0 14 8s-22-4-16 8M18 84c2-16 24-14 22 2s-18 10-12 0M30 104c8-8 16 4 8 10M12 74c8 10 6 24 18 34M26 6c8 4 14 6 16 16" fill="none" stroke="#a88200" stroke-width="3"/>`;
        const hasp = '<path d="M0 18C0 6 8 0 18 0h66v-6h24v42H14C4 36 0 28 0 18zM14 14c-4 4-2 10 4 10h24c8 0 8-10 2-12H20z" fill="#ecb800" fill-rule="evenodd" stroke="#8a6b00" stroke-width="3"/>';

        document.getElementById('scene').innerHTML = `
            <!-- plate 1 -->
            <path d="M955 452l11-7q2-1 5-1h62q3 0 5 1l9 6-14 1-5-2h-54l-3 2z" fill="#4a4d4c"/>
            <path d="M838 452h318q6 0 5 7l-39 262q-1 8-9 8l-260 3v-12l-98 1q-7-1-5-6l77-254q3-8 11-9z" fill="#4a4d4c"/>
            ${plate([[749, 721], [1121, 717], [1159, 453], [834, 453]], '#484a49', '#7d8280')}
            <path d="M895 720.500l144-1.500-1 9-140 2z" fill="#c9cecd"/><path d="M1075 719l34-1-1 8-36 1z" fill="#e6e6e6"/><path d="M1082 718l17 9h-4l-19-9z" fill="#484a49"/>
            <path d="M1054 721h7v6h-7z" fill="none" stroke="#dfe3e2" stroke-width="1.500"/><path d="M1045.500 721h5l-1 6h-3zM1064 721h5l-2 6h-2z" fill="#dfe3e2"/>
            <path d="M900 724h48" stroke="#a3a9a7" stroke-width="2" stroke-dasharray="3 1 2 1 5 2"/><path d="M1007 722h24M1007 726h24M998 727l3-5 3 5z" fill="none" stroke="#b0b5b4"/>
            <g transform="translate(720 420) scale(.33333)">
                <text transform="translate(372 136) rotate(106)" font-family="Lato" font-weight="bold" font-size="32" fill="#b9bdbb">Bambu Textured PEI Plate</text>
                <path d="M88 901l29-98" stroke="#00d000" stroke-width="4"/><path d="M119 800l-8 14 12 2z" fill="#00c000"/>
                <path d="M88 902h115" stroke="#e00000" stroke-width="3"/><path d="M215 902l-18-6v12z" fill="#c00000"/>
                <path d="M88 901 38 834" stroke="#000080" stroke-width="4"/><path d="M32 828l4 16 10-8z" fill="#000080"/>
                <!-- spine -->
                <path d="M511 141l124-3-4 30 6 4-8 34-12-2-6 26 10 2-8 32-12-2-102 416 12 2-10 36-12-2-8 30 10 2-12 36-10-2-10 30H318l10-36 14-2 8-30-12-4 8-34 14-4 116-414-6-2 8-34 12-2 8-24-6-4 6-30 10-2z" fill="#0a2a8b" stroke="#061a5c" stroke-width="3"/>
                <path d="M508 195 352 740M520 195 366 740M598 200 450 740M584 200 436 740" stroke="#061c63" stroke-width="3" stroke-dasharray="5 4" opacity=".7"/>
                <path d="M525 160c20 14 60 14 88-2M520 180c30 30 70 20 86-6M530 200c20 20 50 20 60 0M545 215c0 20 10 24 0 40M555 215c14 14 24 6 24-14M525 175l16 18 20-20 20 22 20-24M420 680c-6 20-30 30-36 50M420 680c6 20 20 24 26 44M390 720c20-14 44-8 50 12M380 745c20-14 60-14 76 4M385 762c20 10 50 10 66-2" fill="none" stroke="#061c63" stroke-width="4" opacity=".75"/>
                <!-- front cover -->
                <path d="M660 142l580-10-6 32-14 6-4 22 14 2-6 32-14 4-2 22 12 4-60 418-14 2-4 26 10 4-8 36-12 4-4 24 8 4-8 42-638 6 12-48 14-4 6-22-10-6 8-34 12-2 8-24-8-6 112-412 8-4 8-26-8-6 8-34 10-2 6-22-8-4z" fill="#0a2a8b" stroke="#061a5c" stroke-width="3"/>
                <path d="M490 818l640-8v8l-642 8z" fill="#04103c"/>
            </g>
            ${carving(cover1, 1500)}
            <g transform="translate(720 420) scale(.33333)" fill="none" stroke="#061c63" stroke-width="3" opacity=".8">
                <path d="M781 629c60-50 100-80 126-130 20-50 0-120-34-164-20-24-34-44-56-52-10 20-12 50-8 80-2 30 4 60 22 90-2 30 2 50 10 60-6 20-4 26 4 34-16 10-30 24-28 36 20-6 30-4 34 4M873 560c20 0 30 10 34 4 4-18 18-24 30-34l14-34c10-4 8-10 6-20 10-20 14-40 10-70 0-40-20-70-40-74-10-16-34-20-60-34"/>
                <path d="M812 340c20 10 40 10 56 24M812 362c22 8 40 10 58 26M818 385c20 8 40 10 56 30M826 410c20 6 34 14 52 34M834 440c20 4 30 10 44 30M840 470c16 4 26 10 34 26M846 500c10 0 20 6 24 18M900 360c24 14 30 40 20 70M915 350c30 20 44 60 30 110M910 460c14-10 20-30 22-46M905 500c20-10 40-20 50-30M812 351c20 10 40 10 56 24M816 374c22 8 40 10 58 26M822 397c20 8 40 10 56 30M830 424c20 6 34 14 52 34" stroke-width="2.500"/>
            </g>
            <g transform="translate(720 420) scale(.33333)">
                <path d="M372 154h88l-10 33h-86z" fill="#ffc800"/><path d="M460 154l7 20-6 26-11-13z" fill="#c79b00"/><path d="M364 187h86l-8 33h-84z" fill="#0a2a8b"/><path d="M450 187l11 13-12 32-7-12z" fill="#061a5c"/><path d="M358 220h84l7 13-84 1z" fill="#04103c"/>
            </g>

            <!-- plate 2 -->
            ${plate([[1194, 715], [1561, 711], [1547, 448], [1223, 451]], light, lightLine)}
            <g transform="translate(1180 420) scale(.33333)">
                <path d="M344 132l574-6v36l-8 4v20l10 4v28l-10 4v20l12 4 8 416-12 4v22l14 4v38l-12 2v26l14 4v40l-640 10v-44l12-2v-22l-8-6v-34l12-4v-22l-10-4 30-416 10-4v-22l-6-4 4-32 10-2v-22l-6-4z" fill="#0a2a8b" stroke="#061a5c" stroke-width="3"/>
                <path d="M292 808l640-8v6l-640 9z" fill="#04103c"/><path d="M626 430v30" stroke="#061c63" stroke-width="2"/>
                <path d="M211 134h87l-2 31h-87z" fill="#ffc800"/><path d="M209 165h87l-2 32h-87z" fill="#0a2a8b"/><path d="M207 197h87v13h-87z" fill="#04103c"/><path d="M298 134l2 28-6 48v-12z" fill="#7a6000"/>
            </g>
            ${carving(cover2, 1500)}

            <!-- plate 3 -->
            ${plate([[1635, 710], [2001, 707], [1935, 444], [1612, 447]], light, lightLine)}
            <g transform="translate(1580 230) scale(.33333)">
                <g fill="#0a2a8b" stroke="#061a5c" stroke-width="3">
                    <path d="M148 50l52 3 61 517-56 3-4-28-12-2-4-30 10-4-2-20-8-4-4-24 8-6-26-318-14-2-4-24 8-6-4-22-6-4-2-28 8-4z"/>
                    <path d="M259 54l54-5 6 18 8 6v22l-6 6 2 12 8 6 2 20-8 2 42 318 12 4 2 26-8 6 4 20 8 4 4 26-8 4 0 20-57 4z"/>
                </g>
                <path d="M176 262c12-16 26-22 46-21M282 240c20 0 40 6 52 22M312 52l66 518" fill="none" stroke="#04103c" stroke-width="3"/>
                <g transform="translate(400 371)">${latch}</g><g transform="translate(576 371) scale(-1 1)">${latch}</g>
                <g transform="translate(507 405) scale(-.9 .9)">${hasp}</g><path d="M534 412h24l-6 20-22 2z" fill="#6b5300"/>
                <g transform="translate(332 677)"><path d="M2 1h116l4 28H6z" fill="#fff"/><path d="M6 29h116l4 27H8z" fill="#ffc800"/><path d="M8 56h118l-2 28H8z" fill="#0a2a8b"/><path d="M8 84h116l-2 32H10z" fill="#04103c"/><path d="M2 1l6 28v54L3 74z" fill="#a88200"/><path d="M2 1l5 28v24L1 46z" fill="#8a8a8a"/></g>
                <g fill="#f4f4f4" stroke="#9a9a9a" stroke-width="2">
                    <path d="M500 692l60 4 106 664H604l-8-32-12-2-4-34 10-6-4-28-10-2-6-38 8-4-68-436-12-2-4-34 8-6-4-18-8-2-4-34 8-2z"/>
                    <path d="M622 696l62-5 4 20 12 4 4 34-6 4 4 16 10 4 2 30-6 4 72 406 12 4 6 38-6 4 6 24 12 4 4 38-8 4 2 26-8 6h-60z"/>
                </g>
                <path d="M506 694l100 664M682 692l122 662M676 694l118 664" fill="none" stroke="#b5b5b5" stroke-width="2"/>
                <path d="M604 1358h62M740 1358h62" stroke="#777" stroke-width="5"/>
                <g transform="translate(549 932) scale(1 1.180)">${latch.replace('M46 0', 'M50 0').replace('h22l-4-30z', 'h34z')}</g>
                <g transform="translate(744 932) scale(-1 1.180) skewX(14) translate(-8 0)">${latch}</g>
                <g transform="translate(627 980)">${hasp}</g><path d="M570 988h30l-4 22-28 2z" fill="#6b5300"/>
            </g>
            <text x="1727" y="416" font-family="DejaVu Sans" font-weight="bold" font-size="10" fill="#1a1a1a">Shutters no AMS Version</text>

            <!-- plate 4 -->
            ${plate([[612, 1159], [1054, 1153], [1108, 779], [727, 784]], light, lightLine)}
            <g transform="matrix(.36990 0 0 .33333 600 660)">
                <path d="M718 58l195 378-189 936-256-294z" fill="#717171"/>
                <path d="M308 1080l160-2 256 294-139 3z" fill="#6c6c6c"/>
                <path d="M316 1081l277 293M325 1081l276 293M334 1081l275 293M343 1081l275 293M352 1080l275 293M361 1080l274 293M370 1080l274 293M379 1080l273 293M388 1080l273 293M397 1080l272 293M406 1079l272 293M415 1079l271 293M424 1079l271 293M433 1079l270 293M442 1079l270 293M451 1079l268 293" stroke="#606060" stroke-width="2"/>
                <path d="M580 58h138l-250 1020-160 2z" fill="#fff"/><path d="M590 69l116-3-248 1002-134 3z" fill="#717171"/><path d="M590 69l116-3-34 142z" fill="#5f5f5f"/>
                <path d="M728 696h10l-14 62-8-4z" fill="#fff"/><path d="M728 696l2-10 8 8-1 6z" fill="#4a4a4a"/>
            </g>

            <!-- plate 5 -->
            ${plate([[1144, 1151], [1584, 1145], [1565, 774], [1185, 779]], light, lightLine)}
            <g transform="translate(1130 740) scale(.33333)">
                <path d="M691 594h34v6h-34zM735 594h33v6h-33z" fill="#8a6b00"/><path d="M693 533h33l-1 61h-34zM736 533h33l-1 61h-33z" fill="#ffc800"/>
                <g fill="#7a5f00"><circle cx="676" cy="639" r="19"/><circle cx="725" cy="639" r="19"/><circle cx="774" cy="639" r="19"/></g>
                <g fill="#ffc800"><circle cx="676" cy="632" r="19"/><circle cx="725" cy="632" r="19"/><circle cx="774" cy="632" r="19"/></g>
            </g>

            ${plateButtons([[1171, 461], [1168, 480.500], [1165.500, 500.500], [1163, 521], [1160, 541.500]], 19.500, 13.500, -10)}
            ${plateButtons([[1561.500, 457], [1563, 476.500], [1564, 496.500], [1565.500, 516.500], [1566.500, 537]], 20, 14, 3)}
            ${plateButtons([[1950, 453], [1955.500, 472.500], [1960.500, 492.500], [1966, 512.500], [1971, 533]], 20, 14, 14)}
            ${plateButtons([[1123.500, 792.500], [1120, 819.500], [1116, 847.500], [1111.500, 875.500], [1107.500, 904.500]], 23.500, 19.500, -8)}
            ${plateButtons([[1581.500, 787.500], [1583, 814], [1584.500, 841.500], [1586.500, 869.500], [1588, 898.500]], 23, 19, 3)}
            ${pencil(851, 440, .9)}${pencil(1238, 436, .85)}${pencil(1623, 432, .85)}${pencil(749, 763, 1)}${pencil(1202, 758, 1)}
            ${label(1127, 711, 13, -8, '01', 'Inter')}${label(1567, 706, 14, 0, '02', 'Inter')}${label(2005, 701, 14, 6, '03', 'Inter')}
            ${label(1062, 1145, 19, -8, '04', 'Open Sans')}${label(1590, 1137, 19, 0, '05', 'Open Sans')}

            <!-- view cube and axes -->
            <path d="M459 1268h64v56h-64z" fill="#bfbfbf"/><path d="M459 1324h64l-3 33h-58z" fill="#b8b8b8"/>
            <text x="491" y="1298" text-anchor="middle" font-family="DejaVu Sans" font-size="11" fill="#333">Top</text>
            <text x="491" y="1342" text-anchor="middle" font-family="DejaVu Sans" font-size="10" fill="#333">Front</text>
            <path d="M459 1357h60" stroke="#cc7070" stroke-width="2"/><path d="M530 1357l-12-5v10z" fill="#cc6060"/>
            <path d="M459 1357v-32" stroke="#7070c8" stroke-width="2"/><path d="M459 1315l-5 13h10z" fill="#6060c8"/><path d="M459 1300l-5 11h10z" fill="#60b060"/>
            <text x="538" y="1361" font-family="Lato" font-size="12" fill="#cc6060">x</text><text x="454" y="1294" font-family="Lato" font-size="12" fill="#70b870">y</text>
            <foreignObject x="564" y="1327" width="36" height="36"><button class="flex items-center justify-center w-9 h-9 rounded-full bg-[#f8f8f8]" aria-label="Fit view"><svg class="w-[22px] h-[22px]" viewBox="0 0 22 22" fill="none" stroke="#3b4446" stroke-width="1.300"><path d="M1 6V2.500Q1 1 2.500 1H6M16 1h3.500Q21 1 21 2.500V6M21 16v3.500Q21 21 19.500 21H16M6 21H2.500Q1 21 1 19.500V16M11 4.500l5.500 3v6.500L11 17.500 5.500 14V7.500zM5.500 7.500 11 11l5.500-3.500M11 11v6.500"/></svg></button></foreignObject>
            <path d="M2215 1048v15l3.500-3 2.500 6 2-1-2.500-5.500h4.500z" fill="#fff" stroke="#222"/>`;
    </script>
</body>
</html>
